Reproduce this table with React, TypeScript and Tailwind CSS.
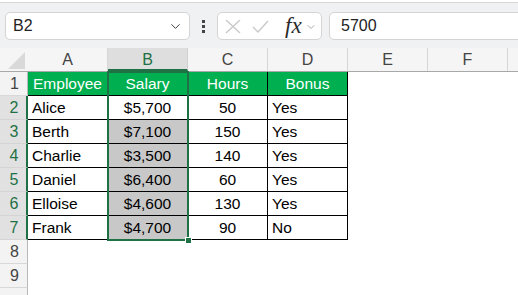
import { ChevronDown } from "lucide-react";

type Row = [string, string, string, string];

const columns = ["A", "B", "C", "D", "E", "F"];

const rows: Row[] = [
  ["Employee", "Salary", "Hours", "Bonus"],
  ["Alice", "$5,700", "50", "Yes"],
  ["Berth", "$7,100", "150", "Yes"],
  ["Charlie", "$3,500", "140", "Yes"],
  ["Daniel", "$6,400", "60", "Yes"],
  ["Elloise", "$4,600", "130", "Yes"],
  ["Frank", "$4,700", "90", "No"],
];

const FormulaBar = () => (
  <div className="flex h-[45px] items-start overflow-hidden bg-[#f0f1f3] pt-[9px] pl-[5px]">
    <div className="flex h-[28px] w-[185px] items-center justify-between rounded-[5px] border border-[#d4d4d4] bg-white pr-[6px] pl-[7px] text-[16px] text-[#222]">
      <span>B2</span>
      <ChevronDown size={15} strokeWidth={1.5} className="text-[#333]" />
    </div>
    <div className="flex h-[28px] w-[27px] flex-col items-center justify-center gap-[2px]">
      <span className="h-[3px] w-[3px] bg-[#444]" />
      <span className="h-[3px] w-[3px] bg-[#444]" />
      <span className="h-[3px] w-[3px] bg-[#444]" />
    </div>
    <div className="flex h-[28px] w-[105px] items-center rounded-[5px] border border-[#d4d4d4] bg-white pl-[7px]">
      {/* cancel / enter buttons, disabled */}
      <svg width="16" height="15" viewBox="0 0 16 15" className="text-[#c8c8c8]">
        <path d="M1 1 L15 14 M15 1 L1 14" stroke="currentColor" strokeWidth="1.3" fill="none" />
      </svg>
      <svg width="17" height="13" viewBox="0 0 17 13" className="ml-[11px] text-[#c8c8c8]">
        <path d="M1 7 L6 12 L16 1" stroke="currentColor" strokeWidth="1.3" fill="none" />
      </svg>
      <span className="mb-[2px] ml-[16px] font-['Liberation_Serif',serif] text-[23px] leading-none text-[#2a2a2a] italic">
        fx
      </span>
      <ChevronDown size={12} strokeWidth={1.4} className="mt-[2px] ml-[3px] text-[#888]" />
    </div>
    <div className="-mr-[10px] ml-[7px] flex h-[28px] flex-1 items-center rounded-[5px] border border-[#d4d4d4] bg-white pl-[11px] text-[16px] text-[#222]">
      5700
    </div>
  </div>
);

const ColumnHeaders = () => (
  <div className="flex h-[24px] border-b border-[#a8a8a8] bg-[#f5f5f5] text-[16px]">
    <div className="relative w-[28px] shrink-0">
      <svg className="absolute top-[4px] left-[8px]" width="17" height="17" viewBox="0 0 17 17">
        <polygon points="17,0 17,17 0,17" fill="#d9d9d9" />
      </svg>
    </div>
    {columns.map((c) => (
      <div
        key={c}
        className={
          c === "B"
            ? "flex w-[80px] shrink-0 items-center justify-center border-r border-b-2 border-r-[#d0d0d0] border-b-[#1e7145] bg-[#dedede] pt-[2px] text-[#1e7145]"
            : "flex w-[80px] shrink-0 items-center justify-center border-r border-[#d6d6d6] text-[#444]"
        }
      >
        {c}
      </div>
    ))}
    <div className="flex-1" />
  </div>
);

const RowHeader = ({ n }: { n: number }) => {
  const picked = n >= 2 && n <= 7;
  return (
    <div
      className={
        picked
          ? "flex w-[28px] shrink-0 items-center justify-center border-r-2 border-b border-r-[#1e7145] border-b-[#d4d4d4] bg-[#e1e1e1] pl-[2px] text-[16px] text-[#1e7145]"
          : "flex w-[28px] shrink-0 items-center justify-center border-r border-b border-r-[#b8b8b8] border-b-[#d8d8d8] bg-[#f3f3f3] pl-[2px] text-[16px] text-[#444]"
      }
    >
      {n < 10 ? n : null}
    </div>
  );
};

const DataRow = ({ n, row }: { n: number; row?: Row }) => {
  const head = n === 1;
  const cell = "flex h-full w-[80px] shrink-0 items-center border-r border-b border-black";
  const fill = head ? "bg-[#00b050] text-white" : "bg-white text-black";
  const salaryFill = head ? "bg-[#00b050] text-white" : n === 2 ? "bg-white text-black" : "bg-[#c8c8c8] text-black";

  return (
    <div className="flex h-[24px]">
      <RowHeader n={n} />
      {row ? (
        <>
          <div className={`${cell} ${fill} ${head ? "justify-center" : "pl-[4px]"}`}>{row[0]}</div>
          <div className={`${cell} ${salaryFill} justify-center`}>{row[1]}</div>
          <div className={`${cell} ${fill} justify-center`}>{row[2]}</div>
          <div className={`${cell} ${fill} ${head ? "justify-center" : "pl-[4px]"}`}>{row[3]}</div>
        </>
      ) : null}
      <div className="flex-1 bg-white" />
    </div>
  );
};

export default function App() {
  return (
    <div className="h-[295px] w-[518px] overflow-hidden bg-white font-['Liberation_Sans',Arial,sans-serif] text-[15.5px]">
      <div className="h-[3px] border-b border-[#d6d6d6] bg-white" />
      <FormulaBar />
      <ColumnHeaders />
      <div className="relative">
        {[1, 2, 3, 4, 5, 6, 7, 8, 9, 10].map((n) => (
          <DataRow key={n} n={n} row={rows[n - 1]} />
        ))}
        {/* selection outline around B1:B7 and the fill handle */}
        <div className="pointer-events-none absolute top-[-1px] left-[107px] h-[170px] w-[82px] border-2 border-[#1e7145]" />
        <div className="absolute top-[165px] left-[185px] h-[7px] w-[7px] border border-white bg-[#1e7145]" />
      </div>
    </div>
  );
}
